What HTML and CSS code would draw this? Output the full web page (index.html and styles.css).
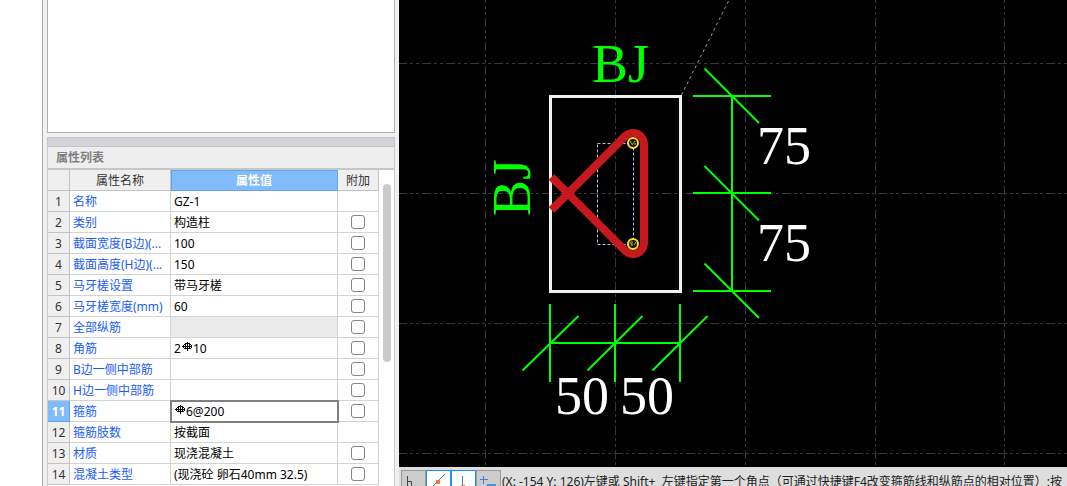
FILE: index.html
```html
<!DOCTYPE html>
<html lang="zh-CN">
<head>
<meta charset="utf-8">
<title>属性列表</title>
<link rel="stylesheet" href="styles.css">
</head>
<body>
<svg class="defs" aria-hidden="true">
  <symbol id="rebar" viewBox="0 0 10 9">
    <path d="M5.500 0v9M3 1.500h5M2 2.500h1M8 2.500h1M1.500 3v3M9.500 3v3M0 4.500h10M2 6.500h7M3.500 2v5M7.500 2v5" fill="none" stroke="#000" stroke-width="1"/>
  </symbol>
</svg>
<div class="app">
  <div class="gutter"></div>
  <aside class="side">
    <div class="list-box"></div>
    <div class="splitter"></div>
    <section class="panel">
      <h2 class="panel-title">属性列表</h2>
      <div class="panel-body">
        <table class="props">
          <colgroup><col class="c-num"><col class="c-name"><col class="c-value"><col class="c-extra"></colgroup>
          <thead>
            <tr><th></th><th>属性名称</th><th class="active">属性值</th><th>附加</th></tr>
          </thead>
          <tbody>
            <tr><th>1</th><td class="name">名称</td><td>GZ-1</td><td></td></tr>
            <tr><th>2</th><td class="name">类别</td><td>构造柱</td><td class="tick"><input type="checkbox" aria-label="类别 附加"></td></tr>
            <tr><th>3</th><td class="name">截面宽度(B边)(...</td><td>100</td><td class="tick"><input type="checkbox" aria-label="截面宽度 附加"></td></tr>
            <tr><th>4</th><td class="name">截面高度(H边)(...</td><td>150</td><td class="tick"><input type="checkbox" aria-label="截面高度 附加"></td></tr>
            <tr><th>5</th><td class="name">马牙槎设置</td><td>带马牙槎</td><td class="tick"><input type="checkbox" aria-label="马牙槎设置 附加"></td></tr>
            <tr><th>6</th><td class="name">马牙槎宽度(mm)</td><td>60</td><td class="tick"><input type="checkbox" aria-label="马牙槎宽度 附加"></td></tr>
            <tr><th>7</th><td class="name">全部纵筋</td><td class="disabled"></td><td class="tick"><input type="checkbox" aria-label="全部纵筋 附加"></td></tr>
            <tr><th>8</th><td class="name">角筋</td><td>2<svg class="rebar"><use href="#rebar"/></svg>10</td><td class="tick"><input type="checkbox" aria-label="角筋 附加"></td></tr>
            <tr><th>9</th><td class="name">B边一侧中部筋</td><td></td><td class="tick"><input type="checkbox" aria-label="B边一侧中部筋 附加"></td></tr>
            <tr><th>10</th><td class="name">H边一侧中部筋</td><td></td><td class="tick"><input type="checkbox" aria-label="H边一侧中部筋 附加"></td></tr>
            <tr><th class="active">11</th><td class="name">箍筋</td><td class="focused"><svg class="rebar"><use href="#rebar"/></svg>6@200</td><td class="tick"><input type="checkbox" aria-label="箍筋 附加"></td></tr>
            <tr><th>12</th><td class="name">箍筋肢数</td><td>按截面</td><td></td></tr>
            <tr><th>13</th><td class="name">材质</td><td>现浇混凝土</td><td class="tick"><input type="checkbox" aria-label="材质 附加"></td></tr>
            <tr><th>14</th><td class="name">混凝土类型</td><td>(现浇砼 卵石40mm 32.5)</td><td class="tick"><input type="checkbox" aria-label="混凝土类型 附加"></td></tr>
          </tbody>
        </table>
        <div class="scroll"><div class="thumb"></div></div>
      </div>
    </section>
  </aside>
  <main class="work">
    <div class="stage">
      <svg class="drawing" role="img" aria-label="构造柱截面">
        <g transform="translate(-399 0)">
          <g class="grid">
            <path d="M398 63.500H2400M398 193.500H2400M398 323.500H2400M398 453.500H2400"/>
            <path d="M485.500-6V1600M615.500-6V1600M745.500-6V1600M875.500-6V1600M1004.500-6V1600"/>
          </g>
          <path class="leader" d="M681.500 95L729 0"/>
          <rect class="outline" x="550.500" y="96.500" width="130" height="195"/>
          <rect class="core" x="597.500" y="143.500" width="36" height="101"/>
          <path class="stirrup" d="M551.500 210L625.200 136.200A11 11 0 0 1 644 144V243A11 11 0 0 1 625.200 250.800L551.500 177"/>
          <g class="bar"><circle cx="633" cy="143" r="5"/><circle cx="633" cy="244" r="5"/></g>
          <g class="mark"><path d="M630 141l2 3M632 145l3-4M635 145v-2M630 242l2 3M632 241v5M634 245l2-3"/></g>
          <g class="dim">
            <path d="M693 96H771M693 193H771M693 291H771M732 96V291"/>
            <path d="M704.500 68.500L759 123M704.500 166L759 220.500M704.500 263.500L759 318"/>
            <path d="M550 304V382M615 304V382M680 304V382M550 343H680"/>
            <path d="M522.500 370.500L578.500 316M587.500 370.500L642.500 316M652.500 370.500L707.500 316"/>
          </g>
          <text class="axis" x="592" y="82">BJ</text>
          <text class="axis" transform="translate(530 216) rotate(-90)">BJ</text>
          <g class="value">
            <text x="757" y="164">75</text>
            <text x="757" y="261">75</text>
            <text x="555" y="414">50</text>
            <text x="620" y="414">50</text>
          </g>
        </g>
      </svg>
    </div>
    <footer class="status">
      <div class="tools">
        <button class="tool" type="button" aria-label="正交"><svg viewBox="0 0 23 23"><path d="M5.500 5v15M5.500 10.500h4v9.500" fill="none" stroke="#444" stroke-width="1"/></svg></button>
        <button class="tool on" type="button" aria-label="中点"><svg viewBox="0 0 23 23"><path d="M3 18L18 3" stroke="#3d7fc4" stroke-width="1"/><path d="M9 9h4v4h-4z" fill="#ef7d3b"/></svg></button>
        <button class="tool on" type="button" aria-label="垂点"><svg viewBox="0 0 23 23"><path d="M10.500 5v14" stroke="#3d7fc4" stroke-width="1"/><path d="M9 14h4v4h-4z" fill="#ef7d3b"/></svg></button>
        <button class="tool" type="button" aria-label="偏移"><svg viewBox="0 0 23 23"><path d="M3 8.500h8M6.500 5v8" stroke="#3d82d0" stroke-width="1"/><path d="M10 13h9v5h-9z" fill="#4b8fe0"/></svg></button>
      </div>
      <span class="hint">(X: -154 Y: 126)左键或 Shift+  左键指定第一个角点（可通过快捷键F4改变箍筋线和纵筋点的相对位置）;按</span>
    </footer>
  </main>
</div>
</body>
</html>
```
FILE: styles.css
```css
* { box-sizing: border-box; }
html, body { height: 100%; margin: 0; }
body {
  overflow: hidden;
  background: #fff;
  font: 12px/20px "Noto Sans", "Noto Sans CJK SC", sans-serif;
}
.defs { display: none; }
.app { display: flex; height: 100%; }
.gutter { flex: 0 0 42px; }

.side {
  flex: 0 0 357px;
  display: flex;
  flex-direction: column;
  min-height: 0;
  padding: 0 4px;
  border-left: 1px solid #a9a9a9;
  background: #f0f0f0;
  overflow: hidden;
}
.list-box {
  flex: 0 0 133px;
  border: 1px solid #adadad;
  border-top: 0;
  background: #fff;
}
.splitter {
  flex: 0 0 10px;
  margin-top: 4px;
  border: 1px solid #c2c3c8;
  background: #d3d5db;
}
.panel {
  flex: 1 0 0;
  min-height: 0;
  display: flex;
  flex-direction: column;
  border: 0 solid #c8cacc;
  border-width: 0 1px;
}
.panel-title {
  flex: none;
  margin: 0;
  padding: 0 8px;
  border-bottom: 2px solid #c4c6ca;
  background: #eee;
  color: #808080;
  font-size: 12px;
  line-height: 21px;
  font-weight: 700;
}
.panel-body {
  flex: 1;
  min-height: 0;
  display: flex;
  background: #fff;
  overflow: hidden;
}
.props {
  flex: none;
  align-self: flex-start;
  width: 331px;
  table-layout: fixed;
  border-collapse: separate;
  border-spacing: 0;
}
.c-num { width: 22px; }
.c-name { width: 101px; }
.c-value { width: 167px; }
.c-extra { width: 41px; }
.props th, .props td {
  height: 21px;
  padding: 2px 0 0 3px;
  border: 0 solid #d3d3d3;
  border-width: 0 1px 1px 0;
  line-height: 18px;
  text-align: left;
  white-space: nowrap;
  overflow: hidden;
}
.props th {
  padding: 2px 0 0;
  border-color: #c3c3c3;
  background: #efefef;
  color: #333;
  font-weight: 400;
  text-align: center;
}
.props th.active {
  border-color: #66a3e6;
  background: #80bbfb;
  color: #fff;
  font-weight: 700;
}
.props thead th.active { box-shadow: inset 1px 1px #66a3e6; }
.props .name { color: #1a5cff; }
.props .disabled { background: #eaeaea; }
.props .focused { outline: 2px solid #808080; outline-offset: -1px; }
.props .tick { padding: 0; text-align: center; }
.tick input {
  appearance: none;
  display: block;
  width: 14px;
  height: 14px;
  margin: 0 auto;
  border: 1px solid #868686;
  border-radius: 3px;
  background: #fff;
}
.rebar { width: 10px; height: 9px; margin: 0 1px; vertical-align: 2px; }
.scroll { flex: 1; padding: 14px 3px 0 4px; }
.thumb { height: 178px; border-radius: 4px; background: #cacaca; }

.work { flex: 1; min-width: 0; display: flex; flex-direction: column; }
.stage { flex: 1; min-height: 0; background: #000; }
.drawing { display: block; width: 100%; height: 100%; }
.drawing path, .drawing rect { fill: none; }
.grid { stroke: #343941; stroke-dasharray: 9 3 3 3 3 3; }
.leader { stroke: #999; stroke-dasharray: 3 3; }
.outline { stroke: #f0f0f0; stroke-width: 3; }
.core { stroke: #a5c6e6; stroke-dasharray: 3 2; }
.stirrup { stroke: #c8181f; stroke-width: 8; }
.bar { fill: #111; stroke: #ffe11c; stroke-width: 2; }
.mark { stroke: #c8ab35; }
.dim { stroke: #0f0; stroke-width: 2; }
.axis, .value { font: 54px "Liberation Serif", serif; }
.axis { fill: #0f0; }
.value { fill: #fff; }

.status {
  flex: 0 0 19px;
  display: flex;
  align-items: flex-start;
  padding: 3px 0 0 2px;
  background: #dedede;
  overflow: hidden;
}
.tools { flex: none; display: flex; }
.tool {
  width: 25px;
  height: 25px;
  padding: 0;
  border: 1px solid #999;
  background: #ccc;
}
.tool.on { border-color: #1e90ff; background: #fff; }
.tool svg { display: block; width: 23px; height: 23px; }
.hint { padding: 2px 0 0 1px; color: #222; white-space: pre; }
```
